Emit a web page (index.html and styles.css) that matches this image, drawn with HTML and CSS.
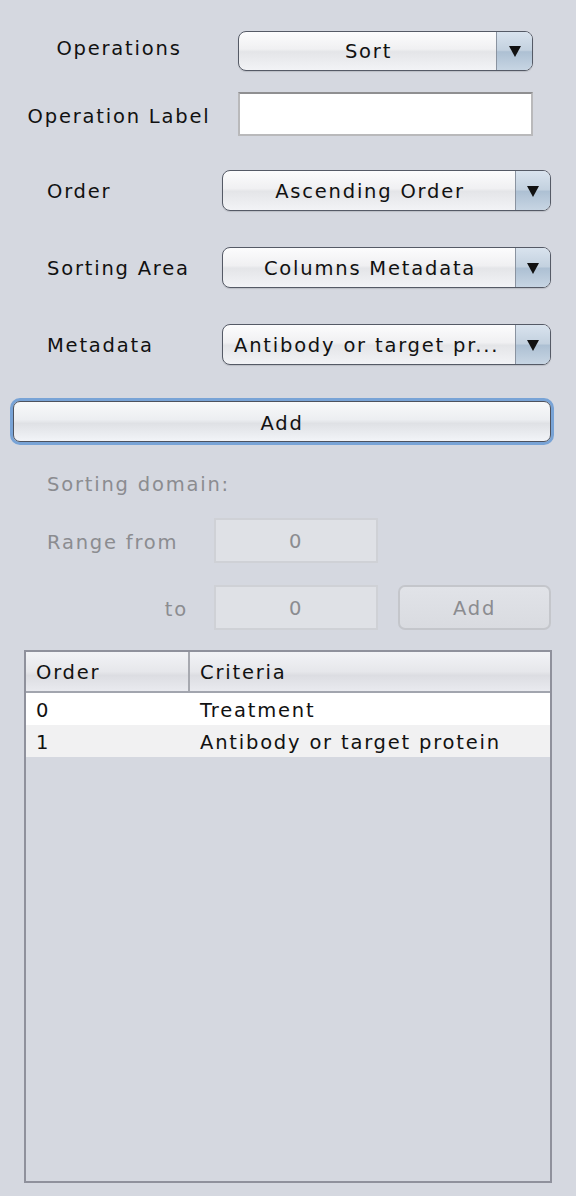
FILE: index.html
```html
<!DOCTYPE html>
<html>
<head>
<meta charset="utf-8">
<link rel="stylesheet" href="styles.css">
</head>
<body>
<div class="panel">
  <div class="top-grid">
    <div class="tlabel up">Operations</div>
    <div class="combo combo-op">
      <div class="combo-text center">Sort</div>
      <div class="combo-arrow"><span class="tri"></span></div>
    </div>
    <div class="tlabel down">Operation Label</div>
    <div class="textfield"></div>
  </div>

  <div class="mid-grid">
    <div class="mlabel">Order</div>
    <div class="combo">
      <div class="combo-text center">Ascending Order</div>
      <div class="combo-arrow"><span class="tri"></span></div>
    </div>
    <div class="mlabel">Sorting Area</div>
    <div class="combo">
      <div class="combo-text center">Columns Metadata</div>
      <div class="combo-arrow"><span class="tri"></span></div>
    </div>
    <div class="mlabel">Metadata</div>
    <div class="combo">
      <div class="combo-text left">Antibody or target pr...</div>
      <div class="combo-arrow"><span class="tri"></span></div>
    </div>
  </div>

  <div class="add-ring">
    <div class="add-btn">Add</div>
  </div>

  <div class="domain">Sorting domain:</div>
  <div class="range-grid">
    <div class="rlabel">Range from</div>
    <div class="dfield">0</div>
    <div></div>
    <div class="rlabel right">to</div>
    <div class="dfield">0</div>
    <div class="dbtn">Add</div>
  </div>

  <div class="table">
    <div class="thead">
      <div class="th th-order">Order</div>
      <div class="th th-crit">Criteria</div>
    </div>
    <div class="trow even">
      <div class="td td-order">0</div>
      <div class="td td-crit">Treatment</div>
    </div>
    <div class="trow odd">
      <div class="td td-order">1</div>
      <div class="td td-crit">Antibody or target protein</div>
    </div>
  </div>
</div>
</body>
</html>
```

FILE: styles.css
```css
html, body {
  margin: 0;
  padding: 0;
  background: #d5d8e0;
}
body {
  width: 576px;
  height: 1196px;
  overflow: hidden;
  font-family: "DejaVu Sans", "Liberation Sans", sans-serif;
  font-size: 19.5px;
  letter-spacing: 1.8px;
  color: #111;
}
.panel {
  padding-top: 31px;
}
.top-grid {
  display: grid;
  grid-template-columns: 202px 295px;
  column-gap: 18px;
  row-gap: 21px;
  padding-left: 18px;
}
.tlabel {
  display: flex;
  align-items: center;
  justify-content: center;
  white-space: nowrap;
}
.tlabel.up {
  padding-bottom: 5px;
}
.tlabel.down {
  padding-top: 4px;
}
.combo {
  height: 41px;
  box-sizing: border-box;
  display: flex;
  border: 1.5px solid #555a66;
  border-radius: 8px;
  overflow: hidden;
  background: linear-gradient(#fcfcfd 0%, #f0f0f2 45%, #e4e5e8 52%, #f2f3f6 100%);
  box-shadow: 0 1px 1px rgba(0,0,0,0.12);
}
.combo-op {
  height: 40px;
}
.combo-text {
  flex: 1;
  display: flex;
  align-items: center;
  white-space: nowrap;
  overflow: hidden;
  padding-top: 1px;
}
.combo-text.center {
  justify-content: center;
  padding-left: 2px;
}
.combo-text.left {
  padding-left: 11px;
}
.combo-arrow {
  width: 34px;
  border-left: 1px solid #8a93a0;
  background: linear-gradient(#d9e3ee 0%, #c3d1df 48%, #adc0d3 52%, #c7d5e3 100%);
  display: flex;
  align-items: center;
  justify-content: center;
}
.combo-op .combo-arrow {
  width: 35px;
}
.tri {
  width: 0;
  height: 0;
  border-left: 6px solid transparent;
  border-right: 6px solid transparent;
  border-top: 11px solid #111;
  margin-top: 1px;
}
.textfield {
  height: 44px;
  box-sizing: border-box;
  background: #fff;
  border: 2px solid #b9b9bb;
  border-top-color: #8f8f91;
}
.mid-grid {
  display: grid;
  grid-template-columns: 175px 329px;
  grid-auto-rows: 41px;
  row-gap: 36px;
  padding-left: 47px;
  margin-top: 34px;
}
.mlabel {
  display: flex;
  align-items: center;
  white-space: nowrap;
  padding-top: 2px;
}
.add-ring {
  margin: 33px 0 0 10px;
  width: 544px;
  height: 47px;
  box-sizing: border-box;
  border: 3px solid #78a3d6;
  border-radius: 10px;
}
.add-btn {
  height: 100%;
  box-sizing: border-box;
  border: 1.5px solid #4d525e;
  border-radius: 7px;
  background: linear-gradient(#f8f9fa 0%, #eceef1 45%, #dfe1e5 55%, #f2f4f8 100%);
  display: flex;
  align-items: center;
  justify-content: center;
  padding-top: 3px;
}
.domain {
  color: #8b8c90;
  margin: 26px 0 0 47px;
  height: 26px;
  display: flex;
  align-items: center;
}
.range-grid {
  display: grid;
  grid-template-columns: 147px 164px 153px;
  grid-auto-rows: 45px;
  column-gap: 20px;
  row-gap: 22px;
  padding-left: 47px;
  margin-top: 21px;
}
.rlabel {
  color: #8b8c90;
  display: flex;
  align-items: center;
  white-space: nowrap;
  padding-top: 3px;
}
.rlabel.right {
  justify-content: flex-end;
  padding-right: 6px;
}
.dfield {
  box-sizing: border-box;
  background: #dfe1e6;
  border: 2px solid #cfd1d6;
  color: #8b8c90;
  display: flex;
  align-items: center;
  justify-content: center;
  padding-top: 2px;
}
.dbtn {
  box-sizing: border-box;
  border: 2px solid #c4c6cb;
  border-radius: 7px;
  background: linear-gradient(#e1e3e8, #d9dbe0);
  color: #8b8c90;
  display: flex;
  align-items: center;
  justify-content: center;
  padding-top: 2px;
}
.table {
  margin: 20px 0 0 24px;
  width: 528px;
  height: 533px;
  box-sizing: border-box;
  border: 2px solid #8f919c;
}
.thead {
  display: flex;
  height: 41px;
  box-sizing: border-box;
  border-bottom: 2px solid #a2a5ae;
  background: linear-gradient(#f2f3f6 0%, #e6e7eb 50%, #dcdde2 60%, #e9eaef 100%);
}
.th {
  display: flex;
  align-items: center;
  padding-left: 10px;
  padding-top: 1px;
}
.th-order {
  width: 152px;
  border-right: 2px solid #a7a9b0;
}
.th-crit {
  flex: 1;
}
.trow {
  display: flex;
  height: 32px;
}
.trow.even { background: #fff; }
.trow.odd { background: #f1f1f2; }
.td {
  display: flex;
  align-items: center;
  padding-left: 10px;
  padding-top: 3px;
  white-space: nowrap;
}
.td-order {
  width: 154px;
}
.td-crit {
  flex: 1;
  padding-left: 10px;
}
```
